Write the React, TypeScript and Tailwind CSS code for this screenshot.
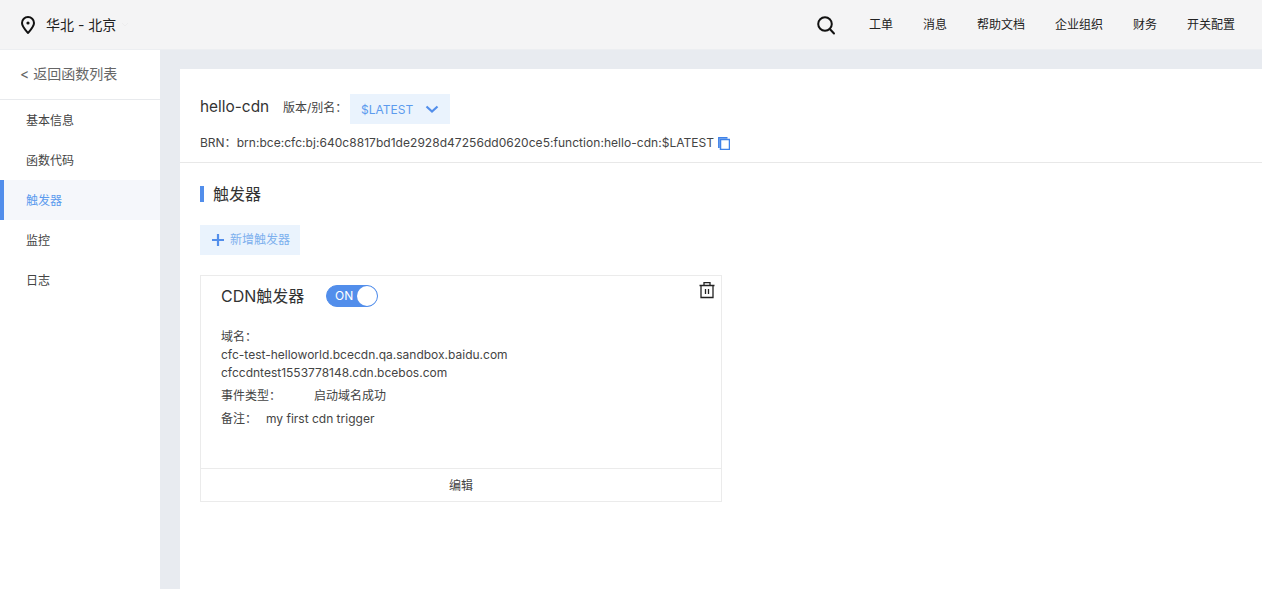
import React from 'react';

const fontStack = 'font-["Inter","Noto_Sans_CJK_SC",sans-serif]';

const navLinks = ['工单', '消息', '帮助文档', '企业组织', '财务', '开关配置'];
const menuItems = ['基本信息', '函数代码', '触发器', '监控', '日志'];

function TopBar() {
  return (
    <header className="h-[50px] shrink-0 flex items-center justify-between bg-[#f4f4f5] border-b border-[#eceef1] pl-[20px] pr-[27px]">
      <div className="flex items-center">
        <svg width="16" height="18" viewBox="0 0 16 18" fill="none" stroke="#111" strokeWidth="2">
          <path d="M8 17c-1-1.300-6-6.300-6-10a6 6 0 0 1 12 0c0 3.700-5 8.700-6 10z" strokeLinejoin="round" />
          <circle cx="8" cy="7" r="1.600" fill="#111" stroke="none" />
        </svg>
        <span className="ml-[10px] text-[14px] text-[#222]">华北 - 北京</span>
        <svg className="ml-[5px]" width="8" height="6" viewBox="0 0 8 6" fill="none" stroke="#ededee" strokeWidth="1">
          <path d="M1 1l3 3 3-3" />
        </svg>
      </div>
      <div className="flex items-center">
        <svg className="mr-[33px]" width="20" height="20" viewBox="0 0 20 20" fill="none" stroke="#111" strokeWidth="2">
          <circle cx="9" cy="9" r="6.800" />
          <path d="M13.800 14l4.200 4.500" strokeLinecap="round" />
        </svg>
        <nav className="flex items-center gap-[30px] text-[12px] text-[#222]">
          {navLinks.map((link) => (
            <span key={link}>{link}</span>
          ))}
        </nav>
      </div>
    </header>
  );
}

function Sidebar() {
  return (
    <aside className="w-[160px] shrink-0 bg-white">
      <div className="h-[50px] flex items-center pl-[20px] pb-[2px] text-[14px] text-[#666] border-b border-[#e8eaed]">
        &lt; 返回函数列表
      </div>
      <ul>
        {menuItems.map((item) =>
          item === '触发器' ? (
            <li key={item} className="h-[40px] flex items-center pt-px pl-[22px] border-l-4 border-[#528eeb] bg-[#f5f7fb] text-[12px] text-[#5c9bee]">
              {item}
            </li>
          ) : (
            <li key={item} className="h-[40px] flex items-center pt-px pl-[26px] text-[12px] text-[#444]">
              {item}
            </li>
          )
        )}
      </ul>
    </aside>
  );
}

function TriggerCard() {
  return (
    <div className="relative w-[522px] h-[227px] flex flex-col border border-[#ebebeb] text-[12px] text-[#444]">
      <div className="flex-1 pl-[20px]">
        <div className="flex items-center h-[40px]">
          <span className="text-[16px] w-[105px] pb-px text-[#333]">CDN触发器</span>
          <div className="w-[52px] h-[22px] rounded-full bg-[#528eeb] border border-[#528eeb] flex items-center justify-between pl-[8px]">
            <span className="text-[12px] text-white">ON</span>
            <span className="w-[20px] h-[20px] rounded-full bg-white" />
          </div>
        </div>
        <div className="mt-[12px] leading-[18px]">
          <div>域名：</div>
          <div>cfc-test-helloworld.bcecdn.qa.sandbox.baidu.com</div>
          <div>cfccdntest1553778148.cdn.bcebos.com</div>
        </div>
        <div className="mt-[5px] leading-[18px] flex">
          <span className="w-[93px]">事件类型：</span>
          <span>启动域名成功</span>
        </div>
        <div className="mt-[5px] leading-[18px] flex">
          <span className="w-[45px]">备注：</span>
          <span>my first cdn trigger</span>
        </div>
      </div>
      <div className="h-[33px] flex items-center justify-center pt-px border-t border-[#ebebeb]">编辑</div>
      <svg className="absolute top-[5px] right-[5px]" width="18" height="18" viewBox="0 0 18 18" fill="none" stroke="#222" strokeWidth="1.300">
        <path d="M1.500 4.500h15M6 4.500V1.700h6v2.800M3 4.500v12h12v-12M7.500 8v5M10.500 8v5" />
      </svg>
    </div>
  );
}

export default function App() {
  return (
    <div className={`h-[589px] flex flex-col overflow-hidden bg-[#e8ebf0] ${fontStack}`}>
      <TopBar />
      <div className="flex-1 flex min-h-0">
        <Sidebar />
        <main className="flex-1 mt-[19px] ml-[20px] bg-white">
          <section className="h-[94px] pl-[20px] border-b border-[#e8e8e8]">
            <div className="flex items-center pt-[25px]">
              <span className="w-[69px] whitespace-nowrap text-[15.4px] text-[#333] pb-[4px]">hello-cdn</span>
              <span className="ml-[14px] w-[67px] whitespace-nowrap text-[12px] text-[#444] pb-[2px]">版本/别名：</span>
              <div className="w-[100px] h-[30px] flex items-center justify-between pl-[11px] pr-[11px] bg-[#eaf3fd] text-[12px] text-[#5c9bee]">
                <span className="pt-px">$LATEST</span>
                <svg width="14" height="9" viewBox="0 0 14 9" fill="none" stroke="#528eeb" strokeWidth="2.200">
                  <path d="M1.500 1.500l5.500 5 5.500-5" />
                </svg>
              </div>
            </div>
            <div className="flex items-center mt-[10px] text-[12px] text-[#444]">
              <span>BRN：</span>
              <span className="tracking-[0.04px]">brn:bce:cfc:bj:640c8817bd1de2928d47256dd0620ce5:function:hello-cdn:$LATEST</span>
              <svg className="ml-[4px]" width="12" height="13" viewBox="0 0 12 13" fill="none" stroke="#3f82e8" strokeWidth="1.500">
                <path d="M2.500 2.500h9v10h-9zM.8 11V.8h8.700" />
              </svg>
            </div>
          </section>
          <section className="pl-[20px]">
            <div className="mt-[22px] flex items-center h-[18px]">
              <span className="w-[4px] h-[16px] bg-[#528eeb]" />
              <span className="ml-[9px] text-[16px] text-[#333]">触发器</span>
            </div>
            <button className="mt-[22px] w-[100px] h-[30px] flex items-center pl-[12px] bg-[#eaf3fd] text-[12px] text-[#7db0ee]">
              <svg width="12" height="12" viewBox="0 0 12 12" fill="none" stroke="#528eeb" strokeWidth="2.200">
                <path d="M6 0v12M0 6h12" />
              </svg>
              <span className="ml-[6px]">新增触发器</span>
            </button>
            <div className="mt-[20px]">
              <TriggerCard />
            </div>
          </section>
        </main>
      </div>
    </div>
  );
}
